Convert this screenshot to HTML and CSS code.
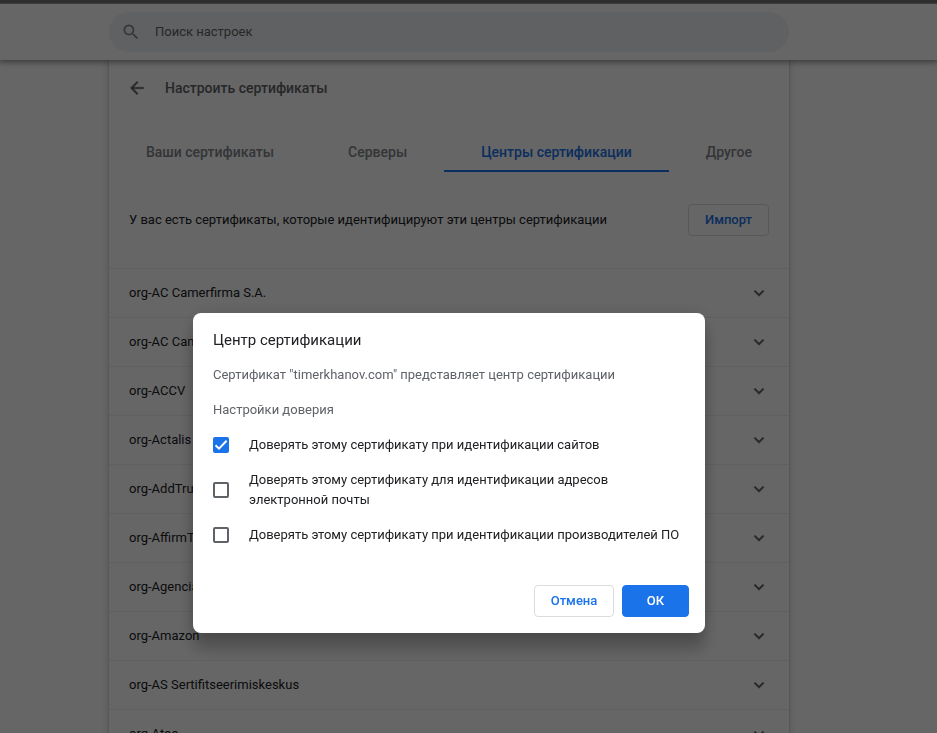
FILE: index.html
```html
<!DOCTYPE html>
<html lang="ru">
<head>
<meta charset="utf-8">
<title>Настройки</title>
<link rel="stylesheet" href="styles.css">
</head>
<body>
<div class="frame-edge"></div>
<div class="page">
  <header class="toolbar">
    <div class="search">
      <svg class="search-icon" viewBox="0 0 24 24"><path d="M15.5 14h-.79l-.28-.27A6.471 6.471 0 0 0 16 9.5 6.5 6.5 0 1 0 9.5 16c1.61 0 3.09-.59 4.23-1.57l.27.28v.79l5 4.99L20.49 19l-4.99-5zm-6 0C7.01 14 5 11.99 5 9.5S7.01 5 9.5 5 14 7.01 14 9.5 11.99 14 9.5 14z"/></svg>
      <span>Поиск настроек</span>
    </div>
  </header>
  <main class="card">
    <div class="card-head">
      <svg class="back-icon" viewBox="0 0 24 24"><path d="M20 11H7.83l5.59-5.59L12 4l-8 8 8 8 1.41-1.41L7.83 13H20v-2z"/></svg>
      <h1>Настроить сертификаты</h1>
    </div>
    <nav class="tabs">
      <div class="tab">Ваши сертификаты</div>
      <div class="tab">Серверы</div>
      <div class="tab selected">Центры сертификации</div>
      <div class="tab">Другое</div>
    </nav>
    <div class="summary">
      <span>У вас есть сертификаты, которые идентифицируют эти центры сертификации</span>
      <button class="btn import">Импорт</button>
    </div>
    <div class="row"><span>org-AC Camerfirma S.A.</span><svg class="chevron" viewBox="0 0 24 24"><path d="M7.41 8.59 12 13.17l4.59-4.58L18 10l-6 6-6-6z"/></svg></div>
    <div class="row"><span>org-AC Cam</span><svg class="chevron" viewBox="0 0 24 24"><path d="M7.41 8.59 12 13.17l4.59-4.58L18 10l-6 6-6-6z"/></svg></div>
    <div class="row"><span>org-ACCV</span><svg class="chevron" viewBox="0 0 24 24"><path d="M7.41 8.59 12 13.17l4.59-4.58L18 10l-6 6-6-6z"/></svg></div>
    <div class="row"><span>org-Actalis</span><svg class="chevron" viewBox="0 0 24 24"><path d="M7.41 8.59 12 13.17l4.59-4.58L18 10l-6 6-6-6z"/></svg></div>
    <div class="row"><span>org-AddTrust</span><svg class="chevron" viewBox="0 0 24 24"><path d="M7.41 8.59 12 13.17l4.59-4.58L18 10l-6 6-6-6z"/></svg></div>
    <div class="row"><span>org-AffirmTrust</span><svg class="chevron" viewBox="0 0 24 24"><path d="M7.41 8.59 12 13.17l4.59-4.58L18 10l-6 6-6-6z"/></svg></div>
    <div class="row"><span>org-Agencia</span><svg class="chevron" viewBox="0 0 24 24"><path d="M7.41 8.59 12 13.17l4.59-4.58L18 10l-6 6-6-6z"/></svg></div>
    <div class="row"><span>org-Amazon</span><svg class="chevron" viewBox="0 0 24 24"><path d="M7.41 8.59 12 13.17l4.59-4.58L18 10l-6 6-6-6z"/></svg></div>
    <div class="row"><span>org-AS Sertifitseerimiskeskus</span><svg class="chevron" viewBox="0 0 24 24"><path d="M7.41 8.59 12 13.17l4.59-4.58L18 10l-6 6-6-6z"/></svg></div>
    <div class="row"><span>org-Atos</span><svg class="chevron" viewBox="0 0 24 24"><path d="M7.41 8.59 12 13.17l4.59-4.58L18 10l-6 6-6-6z"/></svg></div>
  </main>
</div>
<div class="backdrop">
  <section class="dialog" role="dialog">
    <h2>Центр сертификации</h2>
    <p>Сертификат "timerkhanov.com" представляет центр сертификации</p>
    <p>Настройки доверия</p>
    <div class="option">
      <span class="box checked"><svg viewBox="0 0 16 16"><path d="M2.5 8.2 6 11.6 13.6 3.8"/></svg></span>
      <span>Доверять этому сертификату при идентификации сайтов</span>
    </div>
    <div class="option">
      <span class="box"></span>
      <span>Доверять этому сертификату для идентификации адресов электронной почты</span>
    </div>
    <div class="option">
      <span class="box"></span>
      <span>Доверять этому сертификату при идентификации производителей ПО</span>
    </div>
    <div class="actions">
      <button class="btn cancel">Отмена</button>
      <button class="btn primary">ОК</button>
    </div>
  </section>
</div>
</body>
</html>
```
FILE: styles.css
```css
* { box-sizing: border-box; }

body {
  margin: 0;
  height: 733px;
  overflow: hidden;
  background: #fff;
  color: #202124;
  font: 13px/20px Roboto, sans-serif;
}

h1, h2, p { margin: 0; }

.frame-edge {
  height: 4px;
  background: #2e2e2e;
  border-bottom: 1px solid #3e3e3e;
}

.page {
  height: 729px;
  overflow: hidden;
}

.toolbar {
  position: relative;
  height: 56px;
  padding: 8px 0 0 109px;
  background: #fff;
  box-shadow: 0 1px 6px 1px rgba(0, 0, 0, .45);
}

.search {
  display: flex;
  align-items: center;
  width: 680px;
  height: 40px;
  padding-left: 12px;
  border-radius: 20px;
  background: #f1f3f4;
  color: #5f6368;
}

.search-icon {
  width: 20px;
  height: 20px;
  margin-right: 14px;
  fill: #80868b;
}

.card {
  width: 680px;
  height: 720px;
  margin-left: 109px;
  background: #fff;
  box-shadow: 0 1px 2px rgba(60, 64, 67, .3), 0 2px 6px 2px rgba(60, 64, 67, .15);
}

.card-head {
  display: flex;
  align-items: center;
  height: 56px;
  padding-left: 18px;
}

.back-icon {
  width: 20px;
  height: 20px;
  margin-right: 18px;
  fill: #5f6368;
  stroke: #5f6368;
  stroke-width: .4;
}

h1 {
  color: #5f6368;
  font-size: 14px;
  font-weight: 500;
}

.tabs {
  display: flex;
  height: 40px;
  margin-top: 16px;
}

.tab {
  flex: 1 1 auto;
  border-bottom: 2px solid transparent;
  color: #80868b;
  font-size: 14px;
  font-weight: 500;
  line-height: 40px;
  text-align: center;
}

.selected {
  border-color: #1a73e8;
  color: #1a73e8;
}

.summary {
  display: flex;
  align-items: center;
  justify-content: space-between;
  height: 96px;
  padding: 0 20px;
}

.btn {
  height: 32px;
  padding: 0;
  border: 1px solid #dadce0;
  border-radius: 4px;
  background: #fff;
  color: #1a73e8;
  font: 500 13px/20px Roboto, sans-serif;
}

.import { width: 81px; }

.row {
  display: flex;
  align-items: center;
  justify-content: space-between;
  height: 49px;
  padding: 0 20px;
  border-top: 1px solid #f0f0f0;
}

.chevron {
  width: 20px;
  height: 20px;
  fill: #5f6368;
  stroke: #5f6368;
  stroke-width: .6;
}

.backdrop {
  position: fixed;
  inset: 4px 0 0;
  padding: 309px 0 0 193px;
  background: rgba(0, 0, 0, .6);
}

.dialog {
  width: 512px;
  height: 320px;
  padding: 16px 16px 16px 20px;
  border-radius: 8px;
  background: #fff;
  box-shadow: 0 0 16px rgba(0, 0, 0, .12), 0 16px 16px rgba(0, 0, 0, .24);
}

h2 {
  margin-bottom: 14px;
  font-size: 15px;
  font-weight: 400;
  line-height: 22px;
}

.dialog p {
  margin-bottom: 15px;
  color: #5f6368;
}

.option {
  display: flex;
  align-items: center;
  margin-bottom: 15px;
  padding-right: 4px;
}

.box {
  flex: none;
  width: 16px;
  height: 16px;
  margin-right: 20px;
  border: 2px solid #5f6368;
  border-radius: 2px;
}

.checked {
  border: 0;
  background: #1a73e8;
}

.box svg {
  display: block;
  fill: none;
  stroke: #fff;
  stroke-width: 2;
}

.actions {
  display: flex;
  justify-content: flex-end;
  gap: 8px;
  margin-top: 40px;
}

.cancel { width: 80px; }

.primary {
  width: 67px;
  border-color: #1a73e8;
  background: #1a73e8;
  color: #fff;
}
```
